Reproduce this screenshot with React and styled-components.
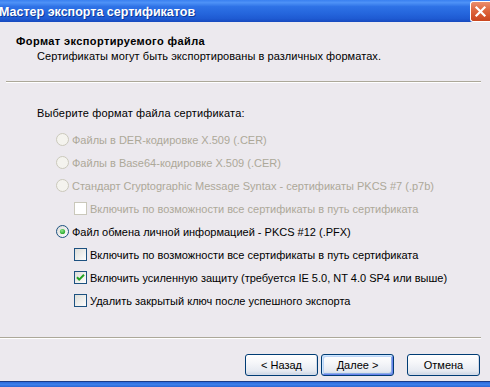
import React from "react";
import styled, { createGlobalStyle } from "styled-components";

const Global = createGlobalStyle`
  html, body { margin: 0; padding: 0; background: #ECE9EE; }
  body { width: 490px; height: 387px; overflow: hidden; }
`;

const Win = styled.div`
  width: 490px;
  height: 387px;
  display: flex;
  flex-direction: column;
  background: #ECE9EE;
  font-family: Tahoma, "Liberation Sans", Arial, sans-serif;
  font-size: 11px;
  color: #000;
  overflow: hidden;
`;

const TitleBar = styled.div`
  height: 22px;
  flex: none;
  display: flex;
  align-items: center;
  justify-content: space-between;
  background: linear-gradient(180deg, #3A80F0 0%, #4E92F7 12%, #2E72E6 30%, #2566DD 60%, #1E5AD2 85%, #1749BE 100%);
`;

const TitleText = styled.span`
  color: #fff;
  font-weight: bold;
  font-size: 12.5px;
  text-shadow: 1px 1px 0 #0F3A9A;
  margin-left: -1px;
  padding-top: 1px;
`;

const CloseBtn = styled.div`
  width: 19px;
  height: 19px;
  margin-top: 1px;
  border: 1px solid #fff;
  border-right: none;
  border-radius: 3px 0 0 3px;
  background: linear-gradient(180deg, #E98E6E 0%, #DF6A42 40%, #D4532B 75%, #C9461F 100%);
  display: flex;
  align-items: center;
  justify-content: center;
`;

const Header = styled.div`
  padding: 13px 0 0 16px;
  height: 46px;
  flex: none;
`;

const HeaderTitle = styled.div`
  font-weight: bold;
  line-height: 13px;
  letter-spacing: 0.4px;
`;

const HeaderSub = styled.div`
  line-height: 13px;
  margin-top: 2px;
  padding-left: 21px;
  letter-spacing: 0.07px;
`;

const Separator = styled.div`
  height: 1px;
  flex: none;
  background: #ACA899;
  border-bottom: 1px solid #FFFFFF;
  margin: ${p => p.$inset ? "0 9px 0 6px" : "0 9px 0 0"};
`;

const Body = styled.div`
  flex: 1;
  display: flex;
  flex-direction: column;
  padding: 24px 0 0 37px;
`;

const Prompt = styled.div`
  line-height: 13px;
  margin-bottom: 8px;
  letter-spacing: 0.15px;
`;

const Row = styled.div`
  height: 23px;
  display: flex;
  align-items: center;
  padding-left: ${p => p.$level === 2 ? 37 : 19}px;
  color: ${p => p.$disabled ? "#ACA899" : "#000"};
  white-space: nowrap;
`;

const Mark = styled.svg`
  flex: none;
  width: 13px;
  height: 13px;
  margin-right: ${p => p.$gap}px;
`;

const Footer = styled.div`
  height: 42px;
  flex: none;
  display: flex;
  align-items: flex-start;
  justify-content: flex-end;
  padding: 15px 10px 0 0;
  box-sizing: border-box;
`;

const Button = styled.button`
  width: 73px;
  height: 22px;
  margin-left: ${p => p.$gap}px;
  padding: 0;
  border: 1px solid #003C74;
  border-radius: 3px;
  font-family: Tahoma, "Liberation Sans", Arial, sans-serif;
  font-size: 11px;
  color: #000;
  background: linear-gradient(180deg, #FFFFFF 0%, #F5F6F9 40%, #E6EAF1 80%, #C9D3E3 100%);
  box-shadow: ${p => p.$default
    ? "inset 1px 1px 0 #CEE7FF, inset -1px -1px 0 #6982EE, inset 2px 2px 0 #BCD4F6, inset -2px -2px 0 #89ADE4"
    : "inset -1px -1px 0 #D4DBE8"};
`;

const BottomFrame = styled.div`
  flex: none;
  height: 5px;
  border-top: 1px solid #1A3C8A;
  background: linear-gradient(180deg, #2B6BDD 0%, #3D7FEA 50%, #2A67D6 100%);
`;

function Radio({ checked, disabled }) {
  const id = checked ? "rg1" : "rg0";
  return (
    <Mark viewBox="0 0 13 13" $gap={3}>
      <defs>
        <linearGradient id={id} x1="0" y1="0" x2="1" y2="1">
          <stop offset="0" stopColor="#DCDCD7" />
          <stop offset="1" stopColor="#FFFFFF" />
        </linearGradient>
        <radialGradient id="dot" cx="0.4" cy="0.35" r="0.7">
          <stop offset="0" stopColor="#8CE78A" />
          <stop offset="1" stopColor="#21A121" />
        </radialGradient>
      </defs>
      <circle
        cx="6.5"
        cy="6.5"
        r="6"
        fill={disabled ? "#F4F3EE" : `url(#${id})`}
        stroke={disabled ? "#CAC8BB" : "#1C5180"}
        strokeWidth="1"
      />
      {checked && <circle cx="6.5" cy="6.5" r="2.6" fill="url(#dot)" />}
    </Mark>
  );
}

function Check({ checked, disabled }) {
  return (
    <Mark viewBox="0 0 13 13" $gap={3}>
      <defs>
        <linearGradient id="cbg" x1="0" y1="0" x2="1" y2="1">
          <stop offset="0" stopColor="#DCDCD7" />
          <stop offset="1" stopColor="#FFFFFF" />
        </linearGradient>
      </defs>
      <rect
        x="0.5"
        y="0.5"
        width="12"
        height="12"
        fill={disabled ? "#FFFFFF" : "url(#cbg)"}
        stroke={disabled ? "#CAC8BB" : "#1C5180"}
      />
      {checked && (
        <path d="M3 6.2 L5.2 8.6 L10 3.8" fill="none" stroke="#21A121" strokeWidth="2" />
      )}
    </Mark>
  );
}

export default function App() {
  return (
    <Win>
      <Global />
      <TitleBar>
        <TitleText>Мастер экспорта сертификатов</TitleText>
        <CloseBtn>
          <svg width="13" height="13" viewBox="0 0 13 13">
            <path d="M2.5 2.5 L10.5 10.5 M10.5 2.5 L2.5 10.5" stroke="#fff" strokeWidth="2.2" strokeLinecap="square" />
          </svg>
        </CloseBtn>
      </TitleBar>
      <Header>
        <HeaderTitle>Формат экспортируемого файла</HeaderTitle>
        <HeaderSub>Сертификаты могут быть экспортированы в различных форматах.</HeaderSub>
      </Header>
      <Separator $inset />
      <Body>
        <Prompt>Выберите формат файла сертификата:</Prompt>
        <Row $disabled>
          <Radio disabled />Файлы в DER-кодировке X.509 (.CER)
        </Row>
        <Row $disabled>
          <Radio disabled />Файлы в Base64-кодировке X.509 (.CER)
        </Row>
        <Row $disabled>
          <Radio disabled />Стандарт Cryptographic Message Syntax - сертификаты PKCS #7 (.p7b)
        </Row>
        <Row $disabled $level={2}>
          <Check disabled />Включить по возможности все сертификаты в путь сертификата
        </Row>
        <Row>
          <Radio checked />Файл обмена личной информацией - PKCS #12 (.PFX)
        </Row>
        <Row $level={2}>
          <Check />Включить по возможности все сертификаты в путь сертификата
        </Row>
        <Row $level={2}>
          <Check checked />Включить усиленную защиту (требуется IE 5.0, NT 4.0 SP4 или выше)
        </Row>
        <Row $level={2}>
          <Check />Удалить закрытый ключ после успешного экспорта
        </Row>
      </Body>
      <Separator />
      <Footer>
        <Button $gap={0}>&lt; Назад</Button>
        <Button $gap={3} $default>Далее &gt;</Button>
        <Button $gap={13}>Отмена</Button>
      </Footer>
      <BottomFrame />
    </Win>
  );
}
